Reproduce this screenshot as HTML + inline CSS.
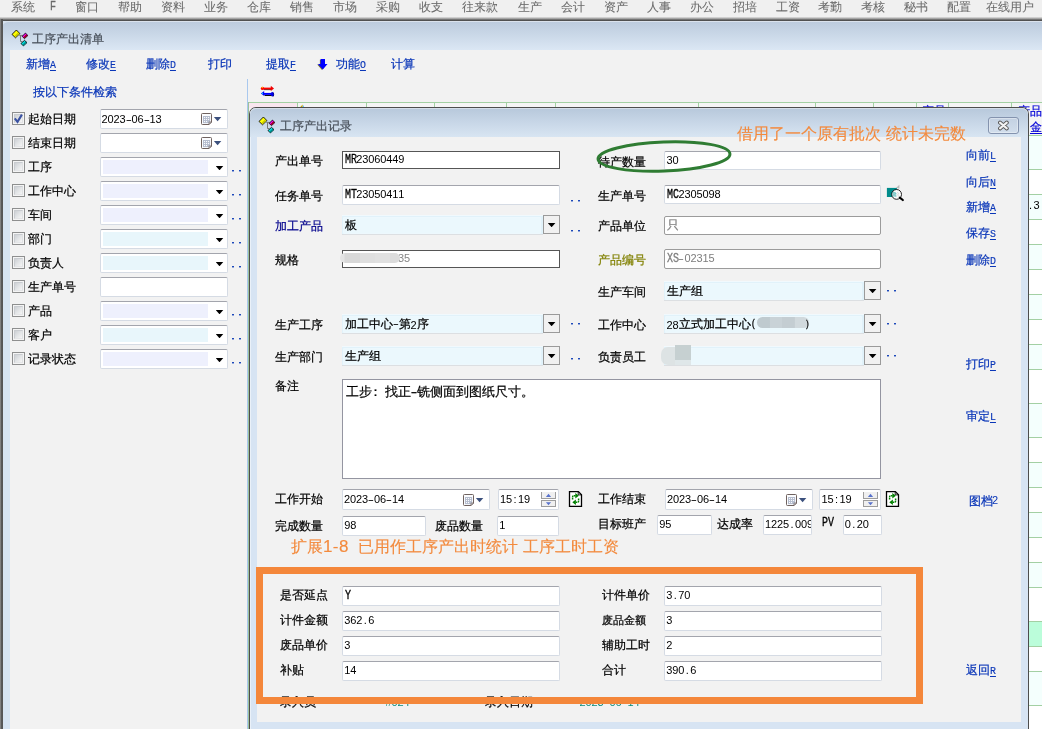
<!DOCTYPE html>
<html lang="zh"><head><meta charset="utf-8"><title>工序产出记录</title>
<style>
*{box-sizing:border-box;margin:0;padding:0}
html,body{width:1042px;height:729px;overflow:hidden}
body{position:relative;background:#f0f0f0;font-family:"Liberation Sans",sans-serif;font-size:12px;line-height:14px;color:#000}
#root{position:absolute;left:0;top:0;width:1042px;height:729px;overflow:hidden;will-change:transform;transform:translateZ(0)}
.a{position:absolute}
.t{position:absolute;white-space:nowrap;height:14px;line-height:14px;font-size:12px;-webkit-text-stroke:.22px}
i{font-style:normal;display:inline-block;width:6px;line-height:14px;vertical-align:baseline}
.d{font-family:"Liberation Sans",sans-serif;font-size:11px;text-align:center;position:relative;top:-.7px;left:-.4px;-webkit-text-stroke:0}
.h{transform:scaleX(1.7)}
.l{font-family:"Liberation Mono",monospace;font-size:12px;transform:scaleX(.8333);transform-origin:0 50%;-webkit-text-stroke:.3px;position:relative;top:-.7px}
.mn{color:#6a6a6a;-webkit-text-stroke:.05px}
.bl{color:#0a36b8}
.or{color:#f38a3d;font-size:16px;height:20px;line-height:20px;-webkit-text-stroke:.12px}
.u{text-decoration:underline;text-underline-offset:1.5px;text-decoration-thickness:1px}
.l.u{font-size:11px;transform:scaleX(.9);-webkit-text-stroke:.15px;top:0}
.in{position:absolute;background:#fff;border:1px solid #d5dbe4;border-top-color:#a3a5ad;border-radius:2px}
.ind{position:absolute;background:#fff;border:1px solid #555}
.ing{position:absolute;background:#fff;border:1px solid #9b9b9b;border-radius:2px}
.cb{position:absolute;width:13px;height:13px;border:1px solid #8e8f8f;background:#f4f4f4}
.cb:after{content:"";box-sizing:border-box;position:absolute;left:1px;top:1px;width:9px;height:9px;border:1px solid #c9ccd0;border-right-color:#dfe1e3;border-bottom-color:#e4e5e7;background:linear-gradient(135deg,#cdd0d4 0%,#e2e4e6 50%,#f5f5f5 100%)}
.ar{position:absolute;width:8px;height:4.5px;background:#000;clip-path:polygon(0 0,100% 0,50% 100%)}
.dd{position:absolute;width:17px;height:19px;border:1px solid #9a9a9a;background:#f1f1f1}
.dt{position:absolute;width:2px;height:1px;background:#1d49ba;box-shadow:0 1px 0 rgba(29,73,186,.45)}
.cy{position:absolute;background:#e1f2fa;box-shadow:0 1px 0 #dcdfe2;border-top:1px solid #f1f9fd}
.cy>b{position:absolute;left:1.5px;top:2px;right:3px;bottom:1.5px;background:#ebf8fd;box-shadow:0 0 0 .6px #f6fcff}
.w{display:inline-block;width:13px;text-align:center}
.lv{position:absolute;top:2px;left:2px;width:105px;height:14px}
</style></head>
<body><div id="root">
<div class="a" style="left:0;top:0;width:1042px;height:18px;background:#f0f0f0"></div>
<div class="t mn" style="left:11px;top:0px;">系统</div>
<div class="t mn" style="left:75px;top:0px;">窗口</div>
<div class="t mn" style="left:118px;top:0px;">帮助</div>
<div class="t mn" style="left:161px;top:0px;">资料</div>
<div class="t mn" style="left:204px;top:0px;">业务</div>
<div class="t mn" style="left:247px;top:0px;">仓库</div>
<div class="t mn" style="left:290px;top:0px;">销售</div>
<div class="t mn" style="left:333px;top:0px;">市场</div>
<div class="t mn" style="left:376px;top:0px;">采购</div>
<div class="t mn" style="left:419px;top:0px;">收支</div>
<div class="t mn" style="left:462px;top:0px;">往来款</div>
<div class="t mn" style="left:518px;top:0px;">生产</div>
<div class="t mn" style="left:561px;top:0px;">会计</div>
<div class="t mn" style="left:604px;top:0px;">资产</div>
<div class="t mn" style="left:647px;top:0px;">人事</div>
<div class="t mn" style="left:690px;top:0px;">办公</div>
<div class="t mn" style="left:733px;top:0px;">招培</div>
<div class="t mn" style="left:776px;top:0px;">工资</div>
<div class="t mn" style="left:818px;top:0px;">考勤</div>
<div class="t mn" style="left:861px;top:0px;">考核</div>
<div class="t mn" style="left:904px;top:0px;">秘书</div>
<div class="t mn" style="left:947px;top:0px;">配置</div>
<div class="t mn" style="left:986px;top:0px;">在线用户</div>
<div class="t mn" style="left:50px;top:0px;"><i class="l">F</i></div>
<div class="a" style="left:0;top:17px;width:1042px;height:4px;background:linear-gradient(#e4e4e4,#9a9a9a 45%,#4e4e4e 80%,#555)"></div>
<div class="a" style="left:0;top:21px;width:1042px;height:708px;background:#d7e4f2"></div>
<div class="a" style="left:2px;top:21px;width:1040px;height:29px;border-top-left-radius:6px;background:linear-gradient(#bccbdd,#c9d7e7 45%,#dbe7f4);box-shadow:inset 0 1px 0 rgba(255,255,255,.45)"></div>
<div class="a" style="left:0;top:19px;width:3px;height:710px;background:linear-gradient(90deg,#9c9c9c,#5a5a5a 40%,#555)"></div>
<div class="a" style="left:10px;top:50px;width:1032px;height:679px;background:#f2f2f2"></div>
<svg class="a" style="left:11px;top:29px" width="18" height="18" viewBox="0 0 18 18">
<g transform="translate(.5 .5)"><path d="M7.8 5.9H11.4M9 5.9V12H10.8" fill="none" stroke="#777" stroke-width="1"/>
<path d="M4.9 .5L8.4 4.1L4 8.3L.5 4.9z" fill="#ffff00" stroke="#000" stroke-width=".85"/>
<path d="M6.3 3.2L7.6 4.4L4.3 7.5L3.2 6.2z" fill="#c8c800"/>
<path d="M13.9 3.6L16.4 6L13 9.1L10.7 6.9z" fill="#ff00ff" stroke="#000" stroke-width=".85"/>
<path d="M14.6 4.9L16 6.1L13.1 8.7L12 7.5z" fill="#a0001c"/>
<path d="M13 10.9L15.5 13.1L11.9 16.4L9.5 14z" fill="#00e8e8" stroke="#000" stroke-width=".85"/>
<path d="M13.8 12.2L15 13.2L12 15.9L11 14.9z" fill="#008c8c"/></g>
</svg>
<div class="t " style="left:32px;top:32px;color:#4a525c">工序产出清单</div>
<div class="t bl" style="left:26px;top:57px;">新增<i class="l u">A</i></div>
<div class="t bl" style="left:86px;top:57px;">修改<i class="l u">E</i></div>
<div class="t bl" style="left:146px;top:57px;">删除<i class="l u">D</i></div>
<div class="t bl" style="left:266px;top:57px;">提取<i class="l u">F</i></div>
<div class="t bl" style="left:336px;top:57px;">功能<i class="l u">O</i></div>
<div class="t bl" style="left:208px;top:57px;">打印</div>
<div class="t bl" style="left:391px;top:57px;">计算</div>
<svg class="a" style="left:317px;top:58px" width="12" height="13" viewBox="0 0 12 13">
<path d="M2.9 1.7H7.2V6.4H9.6L5 11.9L.2 6.4H2.9z" fill="#55551a" opacity=".85"/>
<path d="M3.6 1H8V5.9H10.5L5.8 11.5L1 5.9H3.6z" fill="#0000ff"/>
</svg>
<div class="t bl" style="left:33px;top:85px;">按以下条件检索</div>
<div class="a" style="left:247px;top:79px;width:1px;height:650px;background:#a9c8ee"></div>
<svg class="a" style="left:260px;top:85px" width="15" height="13" viewBox="0 0 15 13">
<rect x="4" y="5.2" width="7.2" height="2.7" fill="#fff"/>
<rect x="4" y="4.3" width="7" height=".8" fill="#000"/>
<rect x="3.5" y="2.6" width="7.8" height="1.8" fill="#ff0000"/>
<circle cx="2.5" cy="3.4" r="1.7" fill="#ff0000"/><circle cx="2.3" cy="2.5" r=".65" fill="#ffe000"/>
<path d="M10.8 .8L14 3.5L10.8 6z" fill="#f00000"/>
<path d="M4.4 10H12.2V10.9H4.8z" fill="#111"/>
<ellipse cx="13.1" cy="9.4" rx="1" ry="2" fill="#000"/>
<rect x="3.6" y="7.9" width="8.4" height="2" fill="#0000ff"/>
<path d="M4.2 6L.9 8.5L4.2 11z" fill="#0000ff"/><circle cx="2.4" cy="8.5" r=".65" fill="#00d8ff"/>
<ellipse cx="12.3" cy="9.2" rx="1.5" ry="2.3" fill="#0000e6"/>
</svg>
<div class="cb" style="left:12px;top:112px"></div>
<svg class="a" style="left:13px;top:113px" width="11" height="11" viewBox="0 0 11 11"><path d="M1.8 5.4 L4.5 8.8 L8.9 1.6" fill="none" stroke="#3b52a2" stroke-width="2.1"/></svg>
<div class="t " style="left:28px;top:112px;">起始日期</div>
<div class="in" style="left:100px;top:109px;width:128px;height:20px">
<svg class="a" style="left:100px;top:3px" width="21" height="13" viewBox="0 0 21 13">
<path d="M1.4 .5H9.6Q10.5 .5 10.5 1.4V9L8 11.5H1.4Q.5 11.5 .5 10.6V1.4Q.5 .5 1.4 .5z" fill="#fbfcfe" stroke="#6f625f" stroke-width="1"/>
<rect x="2" y="3" width="7.1" height="7.1" fill="#b4bccd"/>
<g fill="#fafbfd"><rect x="3" y="4" width="1.1" height="1.1"/><rect x="5" y="4" width="1.1" height="1.1"/><rect x="7" y="4" width="1.1" height="1.1"/><rect x="3" y="6" width="1.1" height="1.1"/><rect x="5" y="6" width="1.1" height="1.1"/><rect x="7" y="6" width="1.1" height="1.1"/><rect x="3" y="8" width="1.1" height="1.1"/><rect x="5" y="8" width="1.1" height="1.1"/></g>
<path d="M8 11.5V9.7Q8 9 8.7 9H10.5z" fill="#e4e7ef" stroke="#6f625f" stroke-width=".8"/>
<path d="M12.9 4.1H20.3L16.6 8.2z" fill="#3b507d"/>
</svg>
</div>
<div class="cb" style="left:12px;top:136px"></div>
<div class="t " style="left:28px;top:136px;">结束日期</div>
<div class="in" style="left:100px;top:133px;width:128px;height:20px">
<svg class="a" style="left:100px;top:3px" width="21" height="13" viewBox="0 0 21 13">
<path d="M1.4 .5H9.6Q10.5 .5 10.5 1.4V9L8 11.5H1.4Q.5 11.5 .5 10.6V1.4Q.5 .5 1.4 .5z" fill="#fbfcfe" stroke="#6f625f" stroke-width="1"/>
<rect x="2" y="3" width="7.1" height="7.1" fill="#b4bccd"/>
<g fill="#fafbfd"><rect x="3" y="4" width="1.1" height="1.1"/><rect x="5" y="4" width="1.1" height="1.1"/><rect x="7" y="4" width="1.1" height="1.1"/><rect x="3" y="6" width="1.1" height="1.1"/><rect x="5" y="6" width="1.1" height="1.1"/><rect x="7" y="6" width="1.1" height="1.1"/><rect x="3" y="8" width="1.1" height="1.1"/><rect x="5" y="8" width="1.1" height="1.1"/></g>
<path d="M8 11.5V9.7Q8 9 8.7 9H10.5z" fill="#e4e7ef" stroke="#6f625f" stroke-width=".8"/>
<path d="M12.9 4.1H20.3L16.6 8.2z" fill="#3b507d"/>
</svg>
</div>
<div class="cb" style="left:12px;top:160px"></div>
<div class="t " style="left:28px;top:160px;">工序</div>
<div class="in" style="left:100px;top:157px;width:128px;height:20px">
<div class="lv" style="background:#eef0fd"></div><div class="ar" style="left:114.5px;top:7.7px"></div>
</div>
<div class="dt" style="left:232px;top:170px"></div><div class="dt" style="left:239px;top:170px"></div>
<div class="cb" style="left:12px;top:184px"></div>
<div class="t " style="left:28px;top:184px;">工作中心</div>
<div class="in" style="left:100px;top:181px;width:128px;height:20px">
<div class="lv" style="background:#eef0fd"></div><div class="ar" style="left:114.5px;top:7.7px"></div>
</div>
<div class="dt" style="left:232px;top:194px"></div><div class="dt" style="left:239px;top:194px"></div>
<div class="cb" style="left:12px;top:208px"></div>
<div class="t " style="left:28px;top:208px;">车间</div>
<div class="in" style="left:100px;top:205px;width:128px;height:20px">
<div class="lv" style="background:#eef0fd"></div><div class="ar" style="left:114.5px;top:7.7px"></div>
</div>
<div class="dt" style="left:232px;top:218px"></div><div class="dt" style="left:239px;top:218px"></div>
<div class="cb" style="left:12px;top:232px"></div>
<div class="t " style="left:28px;top:232px;">部门</div>
<div class="in" style="left:100px;top:229px;width:128px;height:20px">
<div class="lv" style="background:#e8f6fb"></div><div class="ar" style="left:114.5px;top:7.7px"></div>
</div>
<div class="dt" style="left:232px;top:242px"></div><div class="dt" style="left:239px;top:242px"></div>
<div class="cb" style="left:12px;top:256px"></div>
<div class="t " style="left:28px;top:256px;">负责人</div>
<div class="in" style="left:100px;top:253px;width:128px;height:20px">
<div class="lv" style="background:#e8f6fb"></div><div class="ar" style="left:114.5px;top:7.7px"></div>
</div>
<div class="dt" style="left:232px;top:266px"></div><div class="dt" style="left:239px;top:266px"></div>
<div class="cb" style="left:12px;top:280px"></div>
<div class="t " style="left:28px;top:280px;">生产单号</div>
<div class="in" style="left:100px;top:277px;width:128px;height:20px">
</div>
<div class="cb" style="left:12px;top:304px"></div>
<div class="t " style="left:28px;top:304px;">产品</div>
<div class="in" style="left:100px;top:301px;width:128px;height:20px">
<div class="lv" style="background:#eef0fd"></div><div class="ar" style="left:114.5px;top:7.7px"></div>
</div>
<div class="dt" style="left:232px;top:314px"></div><div class="dt" style="left:239px;top:314px"></div>
<div class="cb" style="left:12px;top:328px"></div>
<div class="t " style="left:28px;top:328px;">客户</div>
<div class="in" style="left:100px;top:325px;width:128px;height:20px">
<div class="lv" style="background:#e8f6fb"></div><div class="ar" style="left:114.5px;top:7.7px"></div>
</div>
<div class="dt" style="left:232px;top:338px"></div><div class="dt" style="left:239px;top:338px"></div>
<div class="cb" style="left:12px;top:352px"></div>
<div class="t " style="left:28px;top:352px;">记录状态</div>
<div class="in" style="left:100px;top:349px;width:128px;height:20px">
<div class="lv" style="background:#eef0fd"></div><div class="ar" style="left:114.5px;top:7.7px"></div>
</div>
<div class="dt" style="left:232px;top:362px"></div><div class="dt" style="left:239px;top:362px"></div>
<div class="t " style="left:102px;top:113px;"><i class="d">2</i><i class="d">0</i><i class="d">2</i><i class="d">3</i><i class="d h">-</i><i class="d">0</i><i class="d">6</i><i class="d h">-</i><i class="d">1</i><i class="d">3</i></div>
<div class="a" style="left:248px;top:102px;width:794px;height:627px;background:#fff"></div>
<div class="a" style="left:248px;top:102px;width:794px;height:34px;background:#f5f5f5"></div>
<div class="a" style="left:249px;top:103px;width:48px;height:5px;background:#f9e6ef"></div>
<div class="a" style="left:248px;top:102px;width:794px;height:1px;background:#a3d0a3"></div>
<div class="a" style="left:297px;top:102px;width:1px;height:6px;background:#a3d0a3"></div>
<div class="a" style="left:366px;top:102px;width:1px;height:6px;background:#a3d0a3"></div>
<div class="a" style="left:434px;top:102px;width:1px;height:6px;background:#a3d0a3"></div>
<div class="a" style="left:506px;top:102px;width:1px;height:6px;background:#a3d0a3"></div>
<div class="a" style="left:555px;top:102px;width:1px;height:6px;background:#a3d0a3"></div>
<div class="a" style="left:698px;top:102px;width:1px;height:6px;background:#a3d0a3"></div>
<div class="a" style="left:815px;top:102px;width:1px;height:6px;background:#a3d0a3"></div>
<div class="a" style="left:873px;top:102px;width:1px;height:6px;background:#a3d0a3"></div>
<div class="a" style="left:916px;top:102px;width:1px;height:6px;background:#a3d0a3"></div>
<div class="a" style="left:948px;top:102px;width:1px;height:6px;background:#a3d0a3"></div>
<div class="a" style="left:1011px;top:102px;width:1px;height:6px;background:#a3d0a3"></div>
<div class="a" style="left:248px;top:102px;width:1px;height:627px;background:#9cc29c"></div>
<svg class="a" style="left:300px;top:104px" width="5" height="4" viewBox="0 0 5 4"><path d="M0 3.2L2.6 .6V3.2z" fill="#c8a400"/><path d="M2.4 3.2L3.6 .9L3.9 3.2z" fill="#3cc4f0"/></svg>
<div class="a" style="left:1029px;top:135px;width:13px;height:34px;background:#f4fffd;border-top:1px solid #a3d0a3"></div>
<div class="a" style="left:1029px;top:169px;width:13px;height:25px;background:#fff;border-top:1px solid #a3d0a3"></div>
<div class="a" style="left:1029px;top:194px;width:13px;height:25px;background:#f4fffd;border-top:1px solid #a3d0a3"></div>
<div class="a" style="left:1029px;top:219px;width:13px;height:25px;background:#fff;border-top:1px solid #a3d0a3"></div>
<div class="a" style="left:1029px;top:244px;width:13px;height:25px;background:#f4fffd;border-top:1px solid #a3d0a3"></div>
<div class="a" style="left:1029px;top:269px;width:13px;height:25px;background:#fff;border-top:1px solid #a3d0a3"></div>
<div class="a" style="left:1029px;top:294px;width:13px;height:25px;background:#f4fffd;border-top:1px solid #a3d0a3"></div>
<div class="a" style="left:1029px;top:319px;width:13px;height:25px;background:#fff;border-top:1px solid #a3d0a3"></div>
<div class="a" style="left:1029px;top:344px;width:13px;height:25px;background:#f4fffd;border-top:1px solid #a3d0a3"></div>
<div class="a" style="left:1029px;top:369px;width:13px;height:34px;background:#fff;border-top:1px solid #a3d0a3"></div>
<div class="a" style="left:1029px;top:403px;width:13px;height:34px;background:#f4fffd;border-top:1px solid #a3d0a3"></div>
<div class="a" style="left:1029px;top:437px;width:13px;height:25px;background:#fff;border-top:1px solid #a3d0a3"></div>
<div class="a" style="left:1029px;top:462px;width:13px;height:25px;background:#f4fffd;border-top:1px solid #a3d0a3"></div>
<div class="a" style="left:1029px;top:487px;width:13px;height:25px;background:#fff;border-top:1px solid #a3d0a3"></div>
<div class="a" style="left:1029px;top:512px;width:13px;height:25px;background:#f4fffd;border-top:1px solid #a3d0a3"></div>
<div class="a" style="left:1029px;top:537px;width:13px;height:25px;background:#fff;border-top:1px solid #a3d0a3"></div>
<div class="a" style="left:1029px;top:562px;width:13px;height:25px;background:#f4fffd;border-top:1px solid #a3d0a3"></div>
<div class="a" style="left:1029px;top:587px;width:13px;height:34px;background:#fff;border-top:1px solid #a3d0a3"></div>
<div class="a" style="left:1029px;top:621px;width:13px;height:25px;background:#bbfdda;border-top:1px solid #a3d0a3"></div>
<div class="a" style="left:1029px;top:646px;width:13px;height:25px;background:#fff;border-top:1px solid #a3d0a3"></div>
<div class="a" style="left:1029px;top:671px;width:13px;height:34px;background:#f4fffd;border-top:1px solid #a3d0a3"></div>
<div class="a" style="left:1029px;top:705px;width:13px;height:35px;background:#fff;border-top:1px solid #a3d0a3"></div>
<div class="t " style="left:1018px;top:104px;color:#0505d8">产品</div>
<div class="t " style="left:921.5px;top:104px;color:#0505d8">产品</div>
<div class="t " style="left:1030px;top:120px;color:#0505d8"><span class=u>金额</span></div>
<div class="t " style="left:1028px;top:199px;"><i class="d">.</i><i class="d">3</i></div>
<div class="a" style="left:249px;top:107px;width:780px;height:640px;border-radius:7px 7px 0 0;background:#4d4d4d"></div>
<div class="a" style="left:250px;top:108.2px;width:777.6px;height:640px;border-radius:6px 6px 0 0;background:#d7e4f3;box-shadow:inset 1px 0 0 #eaf1f9"></div>
<div class="a" style="left:250px;top:108.2px;width:777.6px;height:28.8px;border-radius:6px 6px 0 0;background:linear-gradient(#b7c8db,#c6d5e6 45%,#d8e5f2);box-shadow:inset 0 1px 0 rgba(255,255,255,.4)"></div>
<div class="a" style="left:257px;top:137px;width:764px;height:585px;background:#f2f2f2"></div>
<svg class="a" style="left:258px;top:116px" width="18" height="18" viewBox="0 0 18 18">
<g transform="translate(.5 .5)"><path d="M7.8 5.9H11.4M9 5.9V12H10.8" fill="none" stroke="#777" stroke-width="1"/>
<path d="M4.9 .5L8.4 4.1L4 8.3L.5 4.9z" fill="#ffff00" stroke="#000" stroke-width=".85"/>
<path d="M6.3 3.2L7.6 4.4L4.3 7.5L3.2 6.2z" fill="#c8c800"/>
<path d="M13.9 3.6L16.4 6L13 9.1L10.7 6.9z" fill="#ff00ff" stroke="#000" stroke-width=".85"/>
<path d="M14.6 4.9L16 6.1L13.1 8.7L12 7.5z" fill="#a0001c"/>
<path d="M13 10.9L15.5 13.1L11.9 16.4L9.5 14z" fill="#00e8e8" stroke="#000" stroke-width=".85"/>
<path d="M13.8 12.2L15 13.2L12 15.9L11 14.9z" fill="#008c8c"/></g>
</svg>
<div class="t " style="left:279.5px;top:118.5px;color:#4a525c">工序产出记录</div>
<div class="a" style="left:988px;top:117px;width:31px;height:17px;border:1px solid #8493ae;border-radius:3px;background:linear-gradient(#c3d1e2,#d2deec);box-shadow:inset 0 0 0 1px rgba(255,255,255,.35)"></div>
<svg class="a" style="left:997px;top:120px" width="13" height="11" viewBox="0 0 13 11">
<path d="M3 2.6L9.8 8.4M9.8 2.6L3 8.4" stroke="#565656" stroke-width="3.9" stroke-linecap="round"/>
<path d="M3 2.6L9.8 8.4M9.8 2.6L3 8.4" stroke="#f2f2f2" stroke-width="2.1" stroke-linecap="round"/>
</svg>
<div class="t or" style="left:737px;top:124px;">借用了一个原有批次</div>
<div class="t or" style="left:885.5px;top:124px;">统计未完数</div>
<div class="t " style="left:274.5px;top:154px;">产出单号</div>
<div class="t " style="left:274.5px;top:188.5px;">任务单号</div>
<div class="t " style="left:274.5px;top:252.5px;">规格</div>
<div class="t " style="left:274.5px;top:318px;">生产工序</div>
<div class="t " style="left:274.5px;top:350px;">生产部门</div>
<div class="t " style="left:274.5px;top:379px;">备注</div>
<div class="t " style="left:274.5px;top:492px;">工作开始</div>
<div class="t " style="left:274.5px;top:519px;">完成数量</div>
<div class="t " style="left:274.5px;top:219px;color:#00008c">加工产品</div>
<div class="t " style="left:598px;top:154.5px;">待产数量</div>
<div class="t " style="left:598px;top:188.5px;">生产单号</div>
<div class="t " style="left:598px;top:219px;">产品单位</div>
<div class="t " style="left:598px;top:284.5px;">生产车间</div>
<div class="t " style="left:598px;top:318px;">工作中心</div>
<div class="t " style="left:598px;top:350px;">负责员工</div>
<div class="t " style="left:598px;top:492px;">工作结束</div>
<div class="t " style="left:598px;top:517px;">目标班产</div>
<div class="t " style="left:598px;top:252.5px;color:#808000">产品编号</div>
<div class="t " style="left:434.5px;top:519px;">废品数量</div>
<div class="t " style="left:717px;top:517px;">达成率</div>
<div class="t " style="left:822px;top:516px;"><i class="l">P</i><i class="l">V</i></div>
<div class="ind" style="left:342px;top:150.5px;width:218px;height:18.5px"><div class=t style=left:1.7px;top:1.25px;><i class="l">M</i><i class="l">R</i><i class="d">2</i><i class="d">3</i><i class="d">0</i><i class="d">6</i><i class="d">0</i><i class="d">4</i><i class="d">4</i><i class="d">9</i></div></div>
<div class="in" style="left:664.2px;top:151px;width:216.6px;height:19px"><div class=t style=left:1.7px;top:1.5px;><i class="d">3</i><i class="d">0</i></div></div>
<div class="in" style="left:342px;top:185px;width:218px;height:19.5px"><div class=t style=left:1.7px;top:1.75px;><i class="l">M</i><i class="l">T</i><i class="d">2</i><i class="d">3</i><i class="d">0</i><i class="d">5</i><i class="d">0</i><i class="d">4</i><i class="d">1</i><i class="d">1</i></div></div>
<div class="in" style="left:664.2px;top:185px;width:216.6px;height:19.4px"><div class=t style=left:1.7px;top:1.6999999999999993px;><i class="l">M</i><i class="l">C</i><i class="d">2</i><i class="d">3</i><i class="d">0</i><i class="d">5</i><i class="d">0</i><i class="d">9</i><i class="d">8</i></div></div>
<div class="ing" style="left:664.2px;top:215.5px;width:217px;height:19.2px"><div class=t style=left:1.7px;top:1.5999999999999996px;color:#7d7d7d>只</div></div>
<div class="ind" style="left:342px;top:250px;width:218px;height:18px"><div class="t" style="left:55.5px;top:1px;color:#858585;-webkit-text-stroke:0"><i class="d">3</i><i class="d">5</i></div></div>
<div class="a" style="left:340px;top:253px;width:59.5px;height:10px;border-radius:5px;background:linear-gradient(90deg,#e4e4e4 0,#e4e4e4 7%,#d8d8d8 8%,#d8d8d8 33%,#dfdfdf 34%,#dfdfdf 58%,#e1e1e1 59%,#e1e1e1 83%,#dcdcdc 84%)"></div>
<div class="ing" style="left:664.2px;top:249.4px;width:217px;height:19.3px"><div class=t style=left:1.7px;top:1.6500000000000004px;color:#7d7d7d><i class="l">X</i><i class="l">S</i><i class="d h">-</i><i class="d">0</i><i class="d">2</i><i class="d">3</i><i class="d">1</i><i class="d">5</i></div></div>
<div class="cy" style="left:342px;top:215px;width:201px;height:19px"><b></b><div class="t" style="left:3px;top:2.0px">板</div></div>
<div class="dd" style="left:543px;top:215px;height:19px"><div class="ar" style="left:3.6px;top:6.8px"></div></div>
<div class="cy" style="left:664px;top:281px;width:200px;height:19px"><b></b><div class="t" style="left:3px;top:2.0px">生产组</div></div>
<div class="dd" style="left:864px;top:281px;height:19px"><div class="ar" style="left:3.6px;top:6.8px"></div></div>
<div class="cy" style="left:342px;top:314px;width:201px;height:19px"><b></b><div class="t" style="left:3px;top:2.0px">加工中心<i class="d h">-</i>第<span style="position:relative;top:1.2px"><i class="d">2</i></span>序</div></div>
<div class="dd" style="left:543px;top:314px;height:19px"><div class="ar" style="left:3.6px;top:6.8px"></div></div>
<div class="cy" style="left:664px;top:314px;width:200px;height:19px"><b></b><div class="t" style="left:3px;top:2.0px"><span style="position:relative;top:1.2px"><i class="d">2</i><i class="d">8</i></span>立式加工中心<i class=l style="font-size:10px;width:5px">(</i></div></div>
<div class="dd" style="left:864px;top:314px;height:19px"><div class="ar" style="left:3.6px;top:6.8px"></div></div>
<div class="cy" style="left:342px;top:346px;width:201px;height:19px"><b></b><div class="t" style="left:3px;top:2.0px">生产组</div></div>
<div class="dd" style="left:543px;top:346px;height:19px"><div class="ar" style="left:3.6px;top:6.8px"></div></div>
<div class="cy" style="left:664px;top:346px;width:200px;height:19px"><b></b><div class="t" style="left:3px;top:2.0px"></div></div>
<div class="dd" style="left:864px;top:346px;height:19px"><div class="ar" style="left:3.6px;top:6.8px"></div></div>
<div class="a" style="left:757px;top:316.5px;width:52px;height:11px;border-radius:5.5px;background:linear-gradient(90deg,#bfcacf 0,#bfcacf 24%,#c9d2d7 25%,#c9d2d7 48%,#c4cdd2 49%,#c4cdd2 72%,#d1d9dd 73%)"></div>
<div class="t " style="left:804.5px;top:316.5px;"><i class=l style="font-size:9px">)</i></div>
<div class="a" style="left:661px;top:347px;width:16px;height:18px;border-radius:7px 0 0 7px;background:#dde3e4"></div><div class="a" style="left:675px;top:344.5px;width:15.5px;height:15.5px;background:#c6d0d1"></div><div class="a" style="left:675px;top:360px;width:15.5px;height:5px;background:#dfe7e9"></div>
<div class="dt" style="left:571px;top:200px"></div><div class="dt" style="left:578px;top:200px"></div>
<div class="dt" style="left:571px;top:230px"></div><div class="dt" style="left:578px;top:230px"></div>
<div class="dt" style="left:571px;top:323px"></div><div class="dt" style="left:578px;top:323px"></div>
<div class="dt" style="left:571px;top:358px"></div><div class="dt" style="left:578px;top:358px"></div>
<div class="dt" style="left:887px;top:290px"></div><div class="dt" style="left:894px;top:290px"></div>
<div class="dt" style="left:887px;top:323px"></div><div class="dt" style="left:894px;top:323px"></div>
<div class="dt" style="left:887px;top:355px"></div><div class="dt" style="left:894px;top:355px"></div>
<svg class="a" style="left:886px;top:184px" width="19" height="18" viewBox="0 0 19 18">
<path d="M10 4L13.4 .8V4.4z" fill="#b9b9b9"/>
<rect x=".9" y="3.9" width="10" height="9.1" fill="#008b8b"/>
<circle cx="10.6" cy="10.4" r="4.9" fill="#fbfbfb" stroke="#000" stroke-width=".85"/>
<g fill="#009595"><rect x="6.6" y="8.2" width="1" height="1"/><rect x="8.4" y="8.2" width="1" height="1"/><rect x="7.5" y="9.3" width="1" height="1"/><rect x="9.3" y="9.3" width="1" height="1"/><rect x="6.6" y="10.4" width="1" height="1"/><rect x="8.4" y="10.4" width="1" height="1"/><rect x="7.5" y="11.5" width="1" height="1"/><rect x="9.3" y="11.5" width="1" height="1"/></g>
<g fill="#cfcfcf"><rect x="11.2" y="8.2" width="1" height="1"/><rect x="12.1" y="9.3" width="1" height="1"/><rect x="11.2" y="10.4" width="1" height="1"/><rect x="12.1" y="11.5" width="1" height="1"/></g>
<path d="M13.8 13.6L16.8 16" stroke="#000" stroke-width="2.2" stroke-linecap="round"/>
</svg>
<div class="a" style="left:342px;top:379px;width:539px;height:100px;background:#fff;border:1px solid #9495a1"><div class="t" style="left:3px;top:3.5px;font-size:13px;height:15px;line-height:15px"><span class="w">工</span><span class="w">步</span><span class="w" style="position:relative;left:-3px">：</span><span class="w">找</span><span class="w">正</span><span class="w" style="width:6px;transform:scaleX(1.5)">-</span><span class="w">铣</span><span class="w">侧</span><span class="w">面</span><span class="w">到</span><span class="w">图</span><span class="w">纸</span><span class="w">尺</span><span class="w">寸</span><span class="w">。</span></div></div>
<div class="in" style="left:342px;top:488.5px;width:147.5px;height:21px"><div class="t" style="left:1.5px;top:3px"><i class="d">2</i><i class="d">0</i><i class="d">2</i><i class="d">3</i><i class="d h">-</i><i class="d">0</i><i class="d">6</i><i class="d h">-</i><i class="d">1</i><i class="d">4</i></div><svg class="a" style="left:120px;top:4px" width="21" height="13" viewBox="0 0 21 13">
<path d="M1.4 .5H9.6Q10.5 .5 10.5 1.4V9L8 11.5H1.4Q.5 11.5 .5 10.6V1.4Q.5 .5 1.4 .5z" fill="#fbfcfe" stroke="#6f625f" stroke-width="1"/>
<rect x="2" y="3" width="7.1" height="7.1" fill="#b4bccd"/>
<g fill="#fafbfd"><rect x="3" y="4" width="1.1" height="1.1"/><rect x="5" y="4" width="1.1" height="1.1"/><rect x="7" y="4" width="1.1" height="1.1"/><rect x="3" y="6" width="1.1" height="1.1"/><rect x="5" y="6" width="1.1" height="1.1"/><rect x="7" y="6" width="1.1" height="1.1"/><rect x="3" y="8" width="1.1" height="1.1"/><rect x="5" y="8" width="1.1" height="1.1"/></g>
<path d="M8 11.5V9.7Q8 9 8.7 9H10.5z" fill="#e4e7ef" stroke="#6f625f" stroke-width=".8"/>
<path d="M12.9 4.1H20.3L16.6 8.2z" fill="#3b507d"/>
</svg></div>
<div class="in" style="left:665px;top:488.5px;width:147.5px;height:21px"><div class="t" style="left:1.5px;top:3px"><i class="d">2</i><i class="d">0</i><i class="d">2</i><i class="d">3</i><i class="d h">-</i><i class="d">0</i><i class="d">6</i><i class="d h">-</i><i class="d">1</i><i class="d">4</i></div><svg class="a" style="left:120px;top:4px" width="21" height="13" viewBox="0 0 21 13">
<path d="M1.4 .5H9.6Q10.5 .5 10.5 1.4V9L8 11.5H1.4Q.5 11.5 .5 10.6V1.4Q.5 .5 1.4 .5z" fill="#fbfcfe" stroke="#6f625f" stroke-width="1"/>
<rect x="2" y="3" width="7.1" height="7.1" fill="#b4bccd"/>
<g fill="#fafbfd"><rect x="3" y="4" width="1.1" height="1.1"/><rect x="5" y="4" width="1.1" height="1.1"/><rect x="7" y="4" width="1.1" height="1.1"/><rect x="3" y="6" width="1.1" height="1.1"/><rect x="5" y="6" width="1.1" height="1.1"/><rect x="7" y="6" width="1.1" height="1.1"/><rect x="3" y="8" width="1.1" height="1.1"/><rect x="5" y="8" width="1.1" height="1.1"/></g>
<path d="M8 11.5V9.7Q8 9 8.7 9H10.5z" fill="#e4e7ef" stroke="#6f625f" stroke-width=".8"/>
<path d="M12.9 4.1H20.3L16.6 8.2z" fill="#3b507d"/>
</svg></div>
<div class="in" style="left:497.5px;top:488.5px;width:61.5px;height:21px"><div class="t" style="left:2px;top:3px"><i class="d">1</i><i class="d">5</i><i class="d">:</i><i class="d">1</i><i class="d">9</i></div><svg class="a" style="left:42.5px;top:2.5px" width="16" height="16" viewBox="0 0 16 16">
<rect x=".5" y="-1" width="14" height="7.5" fill="#f0f0f0" stroke="#9d9d9d"/>
<rect x=".5" y="8.5" width="14" height="6" fill="#f0f0f0" stroke="#9d9d9d"/>
<path d="M4.9 5L7.5 1.8L10.1 5z" fill="#5872cc"/><path d="M4.9 10.2H10.1L7.5 13.3z" fill="#5872cc"/>
</svg></div>
<div class="in" style="left:819px;top:488.5px;width:61.5px;height:21px"><div class="t" style="left:2px;top:3px"><i class="d">1</i><i class="d">5</i><i class="d">:</i><i class="d">1</i><i class="d">9</i></div><svg class="a" style="left:42.5px;top:2.5px" width="16" height="16" viewBox="0 0 16 16">
<rect x=".5" y="-1" width="14" height="7.5" fill="#f0f0f0" stroke="#9d9d9d"/>
<rect x=".5" y="8.5" width="14" height="6" fill="#f0f0f0" stroke="#9d9d9d"/>
<path d="M4.9 5L7.5 1.8L10.1 5z" fill="#5872cc"/><path d="M4.9 10.2H10.1L7.5 13.3z" fill="#5872cc"/>
</svg></div>
<svg class="a" style="left:568px;top:490px" width="15" height="18" viewBox="0 0 15 18">
<path d="M1.5 1.6H10.4L13.5 4.7V16.4H1.5z" fill="#fff" stroke="#000" stroke-width="1.3"/>
<path d="M10.2 1.8V4.9H13.3" fill="none" stroke="#000" stroke-width=".9"/>
<path d="M4.6 9.6V6.9Q4.6 5.8 5.7 5.8H8" fill="none" stroke="#008000" stroke-width="1.5" stroke-dasharray="1.6 .5"/>
<path d="M7.3 3.1L10.9 5.8L7.3 8.5z" fill="#008000"/>
<path d="M10.6 8.6V11.1Q10.6 12.2 9.5 12.2H7.4" fill="none" stroke="#008000" stroke-width="1.5" stroke-dasharray="1.6 .5"/>
<path d="M7.9 9.5L4.3 12.2L7.9 14.9z" fill="#008000"/>
</svg>
<svg class="a" style="left:885px;top:490px" width="15" height="18" viewBox="0 0 15 18">
<path d="M1.5 1.6H10.4L13.5 4.7V16.4H1.5z" fill="#fff" stroke="#000" stroke-width="1.3"/>
<path d="M10.2 1.8V4.9H13.3" fill="none" stroke="#000" stroke-width=".9"/>
<path d="M4.6 9.6V6.9Q4.6 5.8 5.7 5.8H8" fill="none" stroke="#008000" stroke-width="1.5" stroke-dasharray="1.6 .5"/>
<path d="M7.3 3.1L10.9 5.8L7.3 8.5z" fill="#008000"/>
<path d="M10.6 8.6V11.1Q10.6 12.2 9.5 12.2H7.4" fill="none" stroke="#008000" stroke-width="1.5" stroke-dasharray="1.6 .5"/>
<path d="M7.9 9.5L4.3 12.2L7.9 14.9z" fill="#008000"/>
</svg>
<div class="in" style="left:342px;top:516px;width:83.5px;height:19.5px"><div class=t style=left:1.7px;top:1.75px;><i class="d">9</i><i class="d">8</i></div></div>
<div class="in" style="left:497px;top:516px;width:62px;height:19.5px"><div class=t style=left:1.7px;top:1.75px;><i class="d">1</i></div></div>
<div class="in" style="left:657px;top:515px;width:55px;height:19.5px"><div class=t style=left:1.7px;top:1.75px;><i class="d">9</i><i class="d">5</i></div></div>
<div class="in" style="left:762.5px;top:515px;width:49.5px;height:19.5px;overflow:hidden"><div class="t" style="left:2px;top:2px"><i class="d">1</i><i class="d">2</i><i class="d">2</i><i class="d">5</i><i class="d">.</i><i class="d">0</i><i class="d">0</i><i class="d">9</i></div></div>
<div class="in" style="left:842.5px;top:515px;width:39.5px;height:19.5px"><div class=t style=left:1.7px;top:1.75px;><i class="d">0</i><i class="d">.</i><i class="d">2</i><i class="d">0</i></div></div>
<div class="t or" style="left:291px;top:537px;">扩展<span style="display:inline-block;width:26px;text-align:left;font-size:17px;letter-spacing:.4px">1-8</span></div>
<div class="t or" style="left:358.3px;top:537px;">已用作工序产出时统计</div>
<div class="t or" style="left:523px;top:537px;">工序工时工资</div>
<div class="t " style="left:279.5px;top:695px;">录入员</div>
<div class="t " style="left:485px;top:695px;">录入日期</div>
<div class="t " style="left:386px;top:696px;color:#0a8a78"><i class="d">#</i><i class="d">0</i><i class="d">2</i><i class="d">4</i></div>
<div class="t " style="left:580px;top:696px;color:#0a8a78"><i class="d">2</i><i class="d">0</i><i class="d">2</i><i class="d">3</i><i class="d h">-</i><i class="d">0</i><i class="d">6</i><i class="d h">-</i><i class="d">1</i><i class="d">4</i></div>
<div class="a" style="left:256px;top:567px;width:667px;height:137px;border:7px solid #f4873b"></div>
<div class="t " style="left:279.5px;top:587.5px;">是否延点</div>
<div class="t " style="left:602px;top:587.5px;">计件单价</div>
<div class="in" style="left:342px;top:586px;width:217.5px;height:19.5px"><div class=t style=left:1.7px;top:1.75px;><i class="l">Y</i></div></div>
<div class="in" style="left:664px;top:586px;width:217.5px;height:19.5px"><div class=t style=left:1.7px;top:1.75px;><i class="d">3</i><i class="d">.</i><i class="d">7</i><i class="d">0</i></div></div>
<div class="t " style="left:279.5px;top:612.5px;">计件金额</div>
<div class="t " style="left:602px;top:613px;font-size:11px;color:#111;-webkit-text-stroke:.3px;filter:blur(.3px)">废品金额</div>
<div class="in" style="left:342px;top:611px;width:217.5px;height:19.5px"><div class=t style=left:1.7px;top:1.75px;><i class="d">3</i><i class="d">6</i><i class="d">2</i><i class="d">.</i><i class="d">6</i></div></div>
<div class="in" style="left:664px;top:611px;width:217.5px;height:19.5px"><div class=t style=left:1.7px;top:1.75px;><i class="d">3</i></div></div>
<div class="t " style="left:279.5px;top:637.5px;">废品单价</div>
<div class="t " style="left:602px;top:637.5px;">辅助工时</div>
<div class="in" style="left:342px;top:636px;width:217.5px;height:19.5px"><div class=t style=left:1.7px;top:1.75px;><i class="d">3</i></div></div>
<div class="in" style="left:664px;top:636px;width:217.5px;height:19.5px"><div class=t style=left:1.7px;top:1.75px;><i class="d">2</i></div></div>
<div class="t " style="left:279.5px;top:662.5px;">补贴</div>
<div class="t " style="left:602px;top:662.5px;">合计</div>
<div class="in" style="left:342px;top:661px;width:217.5px;height:19.5px"><div class=t style=left:1.7px;top:1.75px;><i class="d">1</i><i class="d">4</i></div></div>
<div class="in" style="left:664px;top:661px;width:217.5px;height:19.5px"><div class=t style=left:1.7px;top:1.75px;><i class="d">3</i><i class="d">9</i><i class="d">0</i><i class="d">.</i><i class="d">6</i></div></div>
<div class="t bl" style="left:966px;top:148px;">向前<i class="l u">L</i></div>
<div class="t bl" style="left:966px;top:174.5px;">向后<i class="l u">N</i></div>
<div class="t bl" style="left:966px;top:200px;">新增<i class="l u">A</i></div>
<div class="t bl" style="left:966px;top:226px;">保存<i class="l u">S</i></div>
<div class="t bl" style="left:966px;top:253px;">删除<i class="l u">D</i></div>
<div class="t bl" style="left:966px;top:357px;">打印<i class="l u">P</i></div>
<div class="t bl" style="left:966px;top:409px;">审定<i class="l u">L</i></div>
<div class="t bl" style="left:966px;top:662.5px;">返回<i class="l u">R</i></div>
<div class="t bl" style="left:968.5px;top:494px;">图档<i class="d">2</i></div>
<svg class="a" style="left:590px;top:134px" width="150" height="46" viewBox="0 0 150 46"><ellipse cx="74" cy="22.5" rx="66" ry="14.6" fill="none" stroke="#2f7c33" stroke-width="3" transform="rotate(-2.2 74 22.5)"/></svg>
</div></body></html>
